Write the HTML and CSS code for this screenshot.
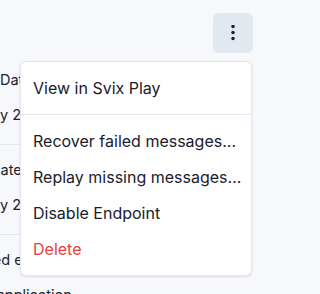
FILE: index.html
```html
<!DOCTYPE html>
<html lang="en">
<head>
<meta charset="utf-8">
<title>Endpoint</title>
<link rel="stylesheet" href="styles.css">
</head>
<body>
<div class="page">
  <header class="header">
    <button class="icon-btn" aria-label="Options">
      <svg width="16" height="16" viewBox="0 0 16 16" aria-hidden="true">
        <circle cx="8" cy="1.5" r="1.75" fill="#1a202c"/>
        <circle cx="8" cy="7.5" r="1.75" fill="#1a202c"/>
        <circle cx="8" cy="13.5" r="1.75" fill="#1a202c"/>
      </svg>
    </button>
  </header>
  <div class="details">
    <div class="row">
      <div class="label">Date Created</div>
      <div class="value shift-may">May 20, 2023</div>
    </div>
    <div class="row">
      <div class="label shift-up">Update Date</div>
      <div class="value shift-may">May 24, 2023</div>
    </div>
    <div class="row last">
      <div class="label shift-sub">Subscribed events</div>
      <div class="value shift-app">No application</div>
    </div>
  </div>
  <div class="menu" role="menu">
    <div class="item" role="menuitem">View in Svix Play</div>
    <div class="divider"></div>
    <div class="item" role="menuitem">Recover failed messages...</div>
    <div class="item" role="menuitem">Replay missing messages...</div>
    <div class="item" role="menuitem">Disable Endpoint</div>
    <div class="item danger" role="menuitem">Delete</div>
  </div>
</div>
</body>
</html>
```
FILE: styles.css
```css
* { box-sizing: border-box; }
html, body {
  margin: 0;
  padding: 0;
  background: #f7f8fc;
  font-family: Inter, "Noto Sans", sans-serif;
  color: #1a202c;
  overflow: hidden;
}
.page {
  position: relative;
  width: 270px;
  height: 294px;
  overflow: hidden;
}
.header {
  display: flex;
  justify-content: flex-end;
  padding: 13px 17px 0 0;
  height: 55px;
}
.icon-btn {
  width: 40px;
  height: 40px;
  border: none;
  border-radius: 6px;
  background: #e2e8f0;
  display: flex;
  align-items: center;
  justify-content: center;
  padding: 0;
}
.details {
  width: 130px;
}
.row {
  padding: 13px 0 17px;
  border-bottom: 1px solid #e2e8f0;
  display: flex;
  flex-direction: column;
  gap: 11px;
  white-space: nowrap;
}
.row.last { border-bottom: none; }
.label, .value {
  font-size: 14.5px;
  line-height: 24px;
}
.shift-may { margin-left: -21px; }
.shift-up { margin-left: -28px; }
.shift-sub { margin-left: -68px; }
.shift-app { margin-left: -27px; }
.menu {
  position: absolute;
  top: 61px;
  left: 20px;
  width: 232px;
  background: #ffffff;
  border: 1px solid #e2e8f0;
  border-radius: 6px;
  padding: 8px 0;
  box-shadow: 0 1px 3px rgba(0,0,0,0.08), 0 1px 2px rgba(0,0,0,0.04);
}
.item {
  padding: 6px 12px;
  font-size: 16px;
  line-height: 24px;
  color: #1a202c;
  white-space: nowrap;
}
.item.danger { color: #e53e3e; }
.divider {
  margin: 8px 0;
  border-top: 1px solid #e2e8f0;
}
```
